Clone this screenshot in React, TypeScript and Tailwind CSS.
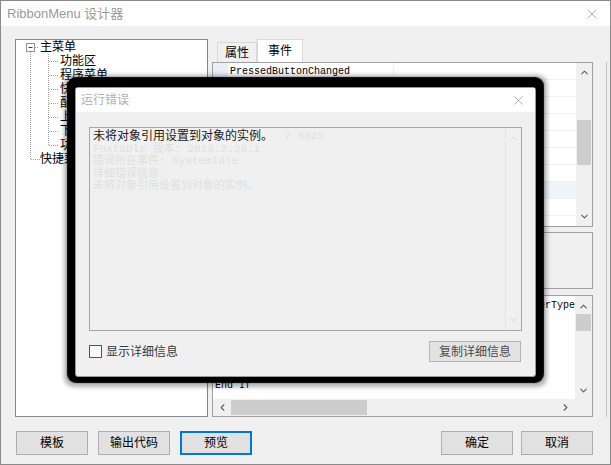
import { X, ChevronUp, ChevronDown, ChevronLeft, ChevronRight } from 'lucide-react';

const treeRows = [
  { text: '主菜单', child: false },
  { text: '功能区', child: true },
  { text: '程序菜单', child: true },
  { text: '快速访问工具栏', child: true },
  { text: '配置菜单', child: true },
  { text: '上下文选项卡', child: true },
  { text: '下拉菜单', child: true },
  { text: '功能区按钮', child: true },
  { text: '快捷菜单', child: false },
];

const eventRows = [
  'PressedButtonChanged',
  'SelectedTabChanged',
  'ButtonClick',
  'MenuOpening',
  'MenuClosed',
  'TabChanging',
  'QuickAccessChanged',
  'ItemClick',
  'ItemChecked',
];

const codeLines = [
  'If e.PressedButton.Tag = "Preview" AndAlso e.Button.UserType',
  '    Dim b As RibbonButton = e.PressedButton',
  '    b.Checked = True',
  '    b.Enabled = True',
  'Else',
  '    e.Cancel = True',
  'End If',
];

function Btn({ label, focused }: { label: string; focused?: boolean }) {
  return (
    <div
      className={
        focused
          ? 'w-[72px] h-[24px] border-2 border-[#0078d7] bg-[#e1e1e1] flex items-center justify-center text-[12px] text-black'
          : 'w-[72px] h-[24px] border border-[#adadad] bg-[#e1e1e1] flex items-center justify-center text-[12px] text-black'
      }
    >
      {label}
    </div>
  );
}

function Tree() {
  return (
    <div className="relative w-[193px] h-full border border-[#828790] bg-white">
      {/* connector lines */}
      <svg className="absolute left-0 top-0" width="191" height="140">
        <g stroke="#a0a0a0" strokeDasharray="1 1" fill="none">
          <line x1="14.5" y1="12" x2="14.5" y2="119" />
          <line x1="15" y1="119.5" x2="24" y2="119.5" />
          <line x1="19" y1="7.5" x2="23" y2="7.5" />
          <line x1="32.5" y1="14" x2="32.5" y2="105" />
          {[21, 35, 49, 63, 77, 91, 105].map((y) => (
            <line key={y} x1="33" y1={y + 0.5} x2="43" y2={y + 0.5} />
          ))}
        </g>
        <rect x="10.5" y="3.5" width="8" height="8" fill="white" stroke="#919191" />
        <line x1="12.5" y1="7.5" x2="16.5" y2="7.5" stroke="#1c3c8c" />
      </svg>
      <div className="relative flex flex-col">
        {treeRows.map((r, i) => (
          <div
            key={i}
            className={
              r.child
                ? 'h-[14px] leading-[14px] pl-[44px] text-[12px] text-black whitespace-nowrap'
                : 'h-[14px] leading-[14px] pl-[24px] text-[12px] text-black whitespace-nowrap'
            }
          >
            {r.text}
          </div>
        ))}
      </div>
    </div>
  );
}

function EventList() {
  return (
    <div className="h-[165px] border border-[#a0a0a0] bg-white flex">
      <div className="flex-1 flex flex-col overflow-hidden">
        {eventRows.map((e, i) => (
          <div
            key={i}
            className={
              i === 7
                ? 'h-[17px] shrink-0 flex border-b border-[#eef1f6] bg-[#f0f4fb]'
                : 'h-[17px] shrink-0 flex border-b border-[#eef1f6]'
            }
          >
            <div className={i === 0 ? 'w-[15px] bg-[#eaeef7]' : 'w-[15px]'} />
            <div className="w-[166px] pl-[2px] border-r border-[#eef1f6] font-['Liberation_Mono',monospace] text-[10px] leading-[17px] text-black whitespace-nowrap">
              {e}
            </div>
            <div className="flex-1" />
          </div>
        ))}
      </div>
      <div className="w-[16px] bg-[#f0f0f0] flex flex-col items-center">
        <ChevronUp size={11} strokeWidth={2.5} className="mt-[4px] text-[#606060]" />
        <div className="mt-[42px] w-[14px] h-[45px] bg-[#cdcdcd]" />
        <div className="flex-1" />
        <ChevronDown size={11} strokeWidth={2.5} className="mb-[4px] text-[#606060]" />
      </div>
    </div>
  );
}

function CodeBox() {
  return (
    <div className="flex-1 mt-[6px] border border-[#a0a0a0] bg-white flex flex-col">
      <div className="flex-1 flex">
        <div className="flex-1 pl-[2px] pt-[3px] overflow-hidden">
          {codeLines.map((l, i) => (
            <div
              key={i}
              className="h-[13.4px] leading-[13.4px] font-['Liberation_Mono',monospace] text-[10px] text-black whitespace-pre"
            >
              {l}
            </div>
          ))}
        </div>
        <div className="w-[17px] bg-[#f0f0f0] flex flex-col items-center">
          <ChevronUp size={11} strokeWidth={2.5} className="mt-[5px] text-[#606060]" />
          <div className="mt-[2px] w-[15px] h-[17px] bg-[#cdcdcd]" />
          <div className="flex-1" />
          <ChevronDown size={11} strokeWidth={2.5} className="mb-[3px] text-[#606060]" />
        </div>
      </div>
      <div className="h-[17px] flex">
        <div className="flex-1 bg-[#f0f0f0] flex items-center">
          <ChevronLeft size={11} strokeWidth={2.5} className="ml-[4px] text-[#606060]" />
          <div className="ml-[3px] w-[136px] h-[15px] bg-[#cdcdcd]" />
          <div className="flex-1" />
          <ChevronRight size={11} strokeWidth={2.5} className="mr-[4px] text-[#606060]" />
        </div>
        <div className="w-[17px] bg-[#f0f0f0]" />
      </div>
    </div>
  );
}

function ErrorDialog() {
  return (
    <div className="absolute left-[74px] top-[86px] w-[461px] h-[290px] rounded-[3px] border border-[#9a9a9a] bg-[#f0f0f0] flex flex-col shadow-[0_-2px_1px_8px_#000,0_-1px_4px_11px_rgba(0,0,0,0.3)]">
      <div className="h-[24px] bg-white flex items-center justify-between pl-[5px] pr-[9px]">
        <span className="text-[12px] text-[#b0b0b0]">运行错误</span>
        <X size={15} strokeWidth={1.2} className="text-[#9a9a9a]" />
      </div>
      <div className="flex-1 flex flex-col px-[13px] pt-[15px]">
        <div className="h-[204px] border border-[#a6a6a6] bg-[#f0f0f0] flex">
          <div className="relative flex-1 pl-[3px] pt-[2px]">
            <div className="flex flex-col font-['Liberation_Mono','Noto_Sans_CJK_SC',monospace] text-[11px] leading-[12.5px] text-[#e0e0e0]">
              <div className="h-[12.5px] whitespace-pre">{'                             7 8825'}</div>
              <div className="whitespace-pre">Foxtable 版本: 2018.2.28.1</div>
              <div className="whitespace-pre">错误所在事件: SystemIdle</div>
              <div className="whitespace-pre">详细错误信息:</div>
              <div className="whitespace-pre">未将对象引用设置到对象的实例。</div>
            </div>
            <div className="absolute left-[3px] top-[2px] text-[12px] leading-[12px] text-[#1a1a1a]">
              未将对象引用设置到对象的实例。
            </div>
          </div>
          <div className="w-[16px] border-l border-[#e4e4e4] flex flex-col items-center">
            <ChevronUp size={11} strokeWidth={2} className="mt-[5px] text-[#cfcfcf]" />
            <div className="flex-1" />
            <ChevronDown size={11} strokeWidth={2} className="mb-[5px] text-[#cfcfcf]" />
          </div>
        </div>
        <div className="mt-[10px] flex items-center justify-between">
          <div className="flex items-center">
            <div className="w-[13px] h-[13px] border border-[#555] bg-[#f8f8f8]" />
            <span className="ml-[4px] text-[12px] text-[#3a3a3a]">显示详细信息</span>
          </div>
          <div className="mr-[1px] w-[92px] h-[21px] border border-[#b4b4b4] bg-[#e3e3e3] flex items-center justify-center text-[12px] text-[#4a4a4a]">
            复制详细信息
          </div>
        </div>
      </div>
    </div>
  );
}

export default function App() {
  return (
    <div className="relative w-[611px] h-[465px] overflow-hidden border border-[#8a8a8a] bg-[#f0f0f0] flex flex-col font-['Liberation_Sans','Noto_Sans_CJK_SC',sans-serif]">
      {/* title bar */}
      <div className="h-[25px] shrink-0 bg-white flex items-center justify-between pl-[6px] pr-[10px]">
        <span className="text-[13px] text-[#9a9a9a]">RibbonMenu 设计器</span>
        <X size={16} strokeWidth={1.1} className="text-[#8a8a8a]" />
      </div>

      {/* main area */}
      <div className="h-[391px] shrink-0 flex pt-[13px] pl-[14px]">
        <Tree />
        <div className="ml-[4px] w-[381px] flex flex-col">
          <div className="h-[23px] flex items-end pl-[5px]">
            <div className="w-[40px] h-[20px] border border-b-0 border-[#d9d9d9] bg-[#f0f0f0] flex items-center justify-center text-[12px] text-black">
              属性
            </div>
            <div className="w-[46px] h-[23px] border border-b-0 border-[#d9d9d9] bg-white flex items-center justify-center text-[12px] text-black">
              事件
            </div>
          </div>
          <EventList />
          <div className="mt-[5px] h-[57px] border border-[#a0a0a0] bg-[#f0f0f0]" />
          <CodeBox />
        </div>
        <div className="ml-[13px] mt-[23px] w-px bg-[#c4c4c4]" />
      </div>

      {/* bottom buttons */}
      <div className="flex pt-[14px] pl-[15px]">
        <div className="flex gap-[10px]">
          <Btn label="模板" />
          <Btn label="输出代码" />
          <Btn label="预览" focused />
        </div>
        <div className="ml-auto mr-[17px] flex gap-[8px]">
          <Btn label="确定" />
          <Btn label="取消" />
        </div>
      </div>

      <ErrorDialog />
    </div>
  );
}
